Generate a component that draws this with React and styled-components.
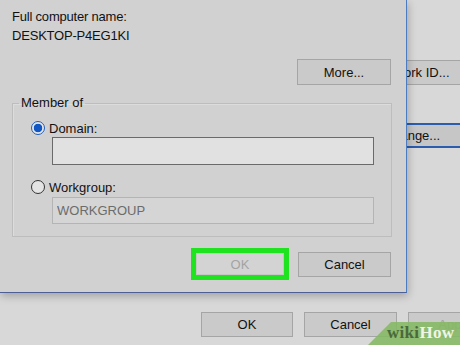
import styled, { createGlobalStyle } from "styled-components";

const Global = createGlobalStyle`
  html, body { margin: 0; padding: 0; }
  body {
    font-family: "Liberation Sans", Arial, sans-serif;
    font-size: 13px;
    color: #111;
  }
`;

export default function App() {
  return (
    <Screen>
      <Global />
      <BackWindow>
        <SideButtons>
          <Button $w={100}>Network ID...</Button>
          <Button $w={100} $focused>Change...</Button>
        </SideButtons>
        <BottomRow>
          <Button $w={92}>OK</Button>
          <Button $w={93}>Cancel</Button>
          <Button $w={93} $disabled>Apply</Button>
        </BottomRow>
      </BackWindow>

      <Dialog>
        <Label>Full computer name:</Label>
        <Label>DESKTOP-P4EG1KI</Label>
        <RightRow>
          <Button $w={94} $h={26}>More...</Button>
        </RightRow>
        <Group>
          <Legend>Member of</Legend>
          <GroupBody>
            <RadioRow>
              <Radio $checked />
              <span>Domain:</span>
            </RadioRow>
            <Field $active />
            <RadioRow $gap={13}>
              <Radio />
              <span>Workgroup:</span>
            </RadioRow>
            <Field value="WORKGROUP" readOnly />
          </GroupBody>
        </Group>
        <ActionRow>
          <Highlight>
            <Button $w={88} $h={22} $disabled $flat>OK</Button>
          </Highlight>
          <Button $w={93}>Cancel</Button>
        </ActionRow>
      </Dialog>

      <Watermark>
        <Wiki>wiki</Wiki>
        <How>How</How>
      </Watermark>
    </Screen>
  );
}

const Screen = styled.div`
  position: relative;
  width: 460px;
  height: 345px;
  overflow: hidden;
  background: #d8d8d8;
`;

const BackWindow = styled.div`
  display: flex;
  flex-direction: column;
  height: 100%;
`;

const SideButtons = styled.div`
  display: flex;
  flex-direction: column;
  gap: 38px;
  padding: 60px 0 0 362px;
`;

const BottomRow = styled.div`
  display: flex;
  gap: 11px;
  margin-top: auto;
  padding: 0 0 8px 201px;
`;

const Button = styled.button`
  flex: none;
  width: ${(p) => p.$w || 93}px;
  height: ${(p) => p.$h || 25}px;
  padding: 0;
  font-family: "Liberation Sans", Arial, sans-serif;
  font-size: 13px;
  color: ${(p) => (p.$disabled ? "#a3a3a3" : "#111")};
  background: ${(p) => (p.$flat ? "#d3d3d3" : "#cacaca")};
  border: 1px solid ${(p) => (p.$flat ? "#c6c6c6" : "#a5a5a5")};
  ${(p) =>
    p.$focused &&
    `
    border: none;
    border-top: 2px solid #2b5cae;
    border-bottom: 2px solid #2b5cae;
    background: #c6c6c6;
  `}
`;

const Dialog = styled.div`
  position: absolute;
  top: 0;
  left: 0;
  width: 407px;
  height: 293px;
  box-sizing: border-box;
  padding: 7px 15px 0 12px;
  background: #d1d1d1;
  border-right: 1px solid #4b7cc0;
  border-bottom: 1px solid #4d5f94;
  box-shadow: 1px 3px 8px rgba(0, 0, 0, 0.25);
  display: flex;
  flex-direction: column;
`;

const Label = styled.div`
  line-height: 19px;
  letter-spacing: -0.2px;
`;

const RightRow = styled.div`
  display: flex;
  justify-content: flex-end;
  margin-top: 14px;
`;

const Group = styled.fieldset`
  margin: 11px 0 0 0;
  padding: 0;
  border: 1px solid #bdbdbd;
  box-shadow: inset 1px 1px 0 #dcdcdc;
`;

const Legend = styled.legend`
  margin-left: 6px;
  padding: 0 2px;
  line-height: 14px;
`;

const GroupBody = styled.div`
  display: flex;
  flex-direction: column;
  padding: 9px 17px 12px 18px;
`;

const RadioRow = styled.div`
  display: flex;
  align-items: center;
  gap: 4px;
  height: 18px;
  margin-top: ${(p) => p.$gap || 0}px;
`;

const Radio = styled.span`
  box-sizing: border-box;
  width: 14px;
  height: 14px;
  border-radius: 50%;
  border: 1px solid ${(p) => (p.$checked ? "#1f5fbf" : "#333")};
  background: ${(p) =>
    p.$checked
      ? "radial-gradient(circle, #1057c4 0 4px, #e6e6e6 4.6px)"
      : "#e4e4e4"};
`;

const Field = styled.input`
  box-sizing: border-box;
  width: 322px;
  height: ${(p) => (p.$active ? 28 : 27)}px;
  margin: ${(p) => (p.$active ? 0 : 1)}px 0 0 21px;
  padding: 0 0 0 4px;
  font-family: "Liberation Sans", Arial, sans-serif;
  font-size: 13px;
  color: #6c6c6c;
  background: ${(p) => (p.$active ? "#e1e1e1" : "#d5d5d5")};
  border: 1px solid ${(p) => (p.$active ? "#6a6a6a" : "#b4b4b4")};
  outline: none;
`;

const ActionRow = styled.div`
  display: flex;
  justify-content: flex-end;
  align-items: center;
  gap: 9px;
  margin-top: 11px;
`;

const Highlight = styled.div`
  display: flex;
  border: 5px solid #1fe31f;
`;

const Watermark = styled.div`
  position: absolute;
  right: 0;
  bottom: 0;
  width: 92px;
  height: 23px;
  box-sizing: border-box;
  padding: 0 0 1px 19px;
  display: flex;
  align-items: center;
  background: rgba(132, 184, 98, 0.88);
  clip-path: polygon(23px 0, 100% 0, 100% 100%, 0 100%);
  font-family: "Liberation Serif", "DejaVu Serif", serif;
  font-weight: bold;
  font-size: 17px;
  letter-spacing: 0.3px;
`;

const Wiki = styled.span`
  color: #4a6a3c;
`;

const How = styled.span`
  color: #eef5e6;
`;
